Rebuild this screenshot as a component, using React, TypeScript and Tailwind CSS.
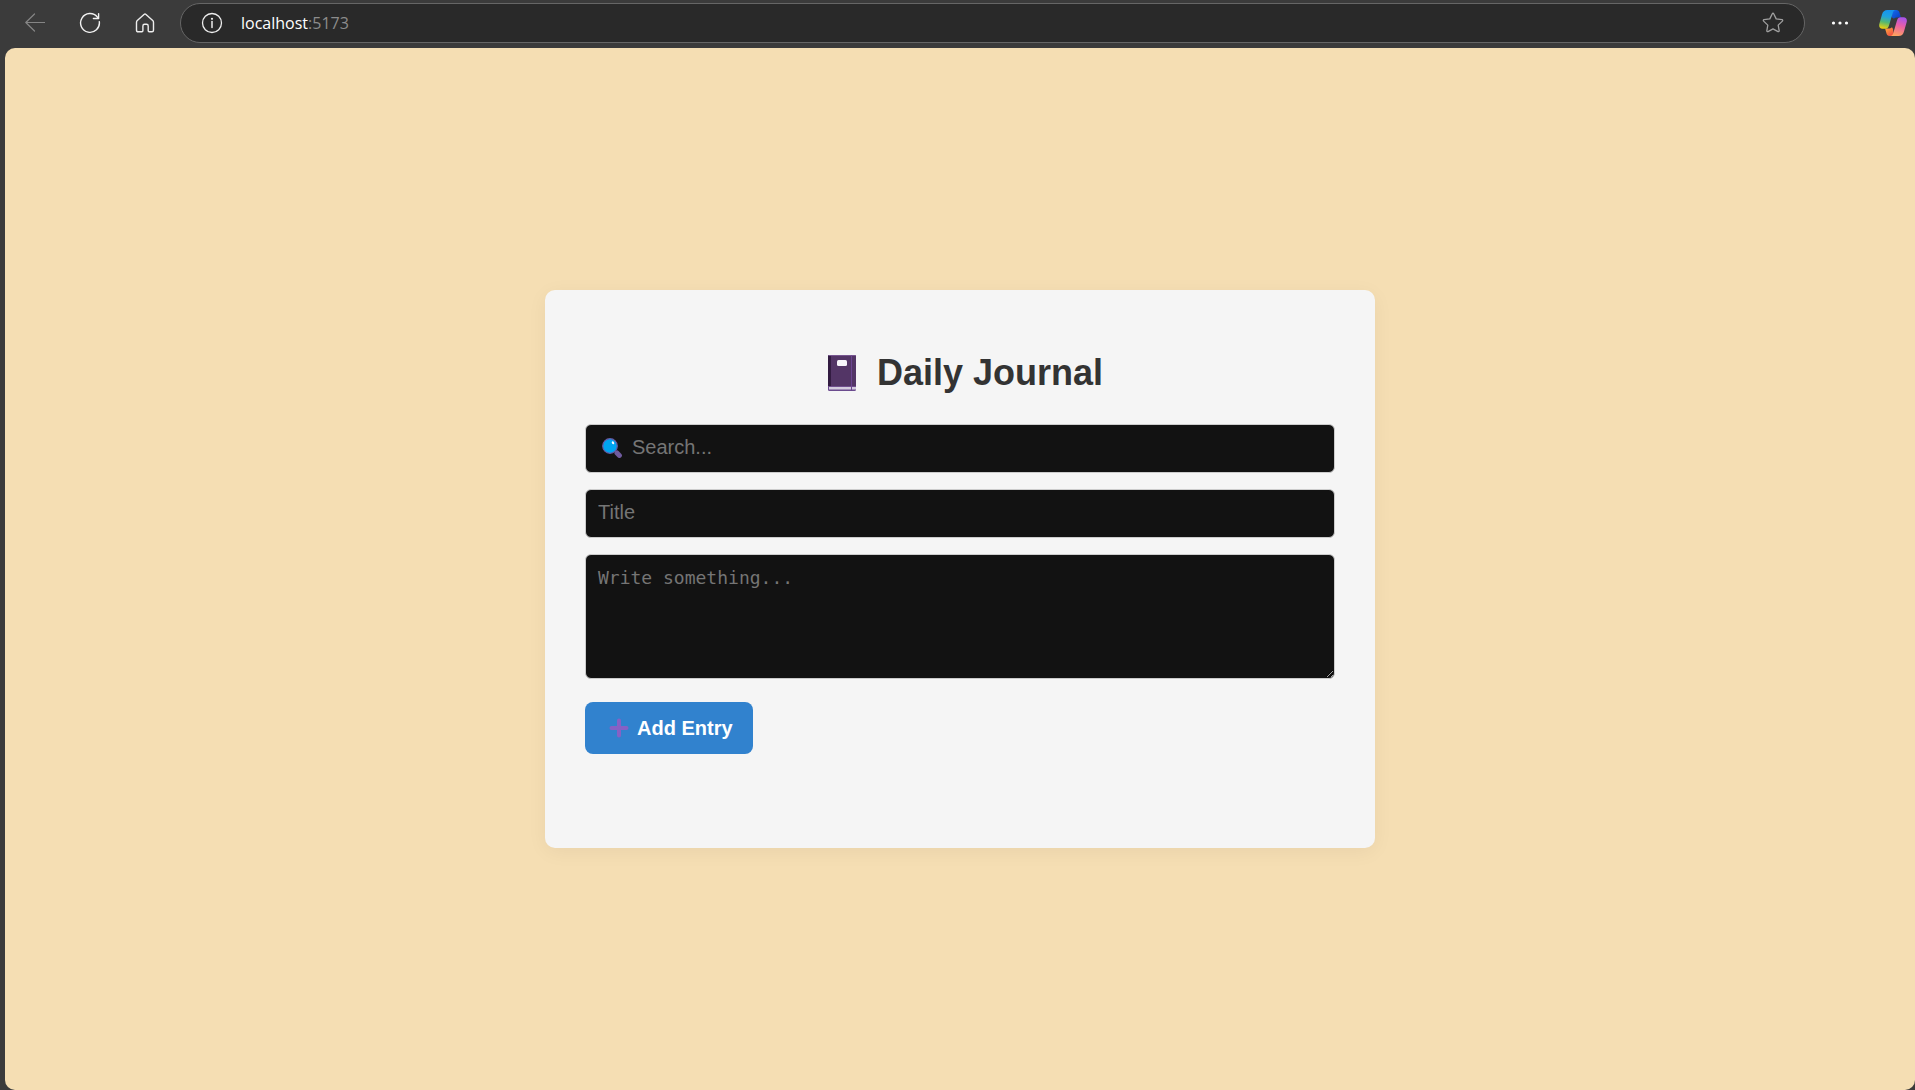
import { useState } from "react";

const fieldClass =
  "block w-full rounded-md border border-[#cccccc] bg-[#121212] px-3 pb-0.5 text-xl text-white outline-none placeholder:text-[#757575] placeholder:opacity-100";

function BackIcon() {
  return (
    <svg width="20" height="20" viewBox="0 0 20 20" fill="none" stroke="#858585" strokeWidth="1.2" strokeLinecap="round" strokeLinejoin="round" aria-hidden="true">
      <path d="M19.500 9.500H.8M9.500 1 .8 9.500l8.700 8.500" />
    </svg>
  );
}

function RefreshIcon() {
  return (
    <svg width="22" height="22" viewBox="0 0 22 22" fill="none" stroke="#f2f2f2" strokeWidth="1.4" strokeLinecap="round" strokeLinejoin="round" aria-hidden="true">
      <path d="M20.300 9.600a9.400 9.400 0 1 1-2-4.600l1 1.300" />
      <path d="M19.600 1.600v4.900h-5.200" />
    </svg>
  );
}

function HomeIcon() {
  return (
    <svg width="20" height="20" viewBox="0 0 20 20" fill="none" stroke="#ededed" strokeWidth="1.4" strokeLinejoin="round" aria-hidden="true">
      <path d="M1.500 9.400c0-.7.3-1.300.8-1.800l6.700-6.100c.6-.5 1.400-.5 2 0l6.700 6.100c.5.5.8 1.100.8 1.800v7.900c0 .9-.6 1.500-1.500 1.500h-2.800c-.6 0-1-.4-1-1v-4.800c0-1-.7-1.700-1.700-1.700h-1.900c-1 0-1.700.7-1.700 1.700v4.800c0 .6-.4 1-1 1H3c-.9 0-1.500-.6-1.500-1.500z" />
    </svg>
  );
}

function InfoIcon() {
  return (
    <svg width="22" height="22" viewBox="0 0 22 22" fill="none" aria-hidden="true">
      <circle cx="11" cy="11" r="9.5" stroke="#ededed" strokeWidth="1.3" />
      <path d="M11 9.600v6" stroke="#ededed" strokeWidth="1.5" strokeLinecap="round" />
      <circle cx="11" cy="6.8" r="1.1" fill="#ededed" />
    </svg>
  );
}

function StarIcon() {
  return (
    <svg width="22" height="22" viewBox="0 0 22 22" fill="none" stroke="#a0a0a0" strokeWidth="1.3" strokeLinejoin="round" aria-hidden="true">
      <path d="M10.300 1.700c.3-.6 1.100-.6 1.400 0l2.500 5.200 5.800.8c.7.100.9.900.4 1.400l-4.200 4 1 5.700c.1.600-.6 1.100-1.200.8L11 16.900l-5 2.700c-.6.300-1.300-.2-1.200-.8l1-5.700-4.200-4c-.5-.5-.3-1.300.4-1.400l5.800-.8z" />
    </svg>
  );
}

function DotsIcon() {
  return (
    <svg width="18" height="4" viewBox="0 0 18 4" fill="#ffffff" aria-hidden="true">
      <circle cx="2.5" cy="2" r="1.6" />
      <circle cx="9" cy="2" r="1.6" />
      <circle cx="15.5" cy="2" r="1.6" />
    </svg>
  );
}

function CopilotIcon() {
  return (
    <svg width="28" height="26" viewBox="0 0 28 26" aria-hidden="true">
      <defs>
        <linearGradient id="cp-left" x1="9" y1="0" x2="5" y2="19" gradientUnits="userSpaceOnUse">
          <stop offset="0" stopColor="#1593f0" />
          <stop offset=".35" stopColor="#20a2dc" />
          <stop offset=".65" stopColor="#56b870" />
          <stop offset="1" stopColor="#f5d20a" />
        </linearGradient>
        <linearGradient id="cp-right" x1="23" y1="7" x2="17" y2="26" gradientUnits="userSpaceOnUse">
          <stop offset="0" stopColor="#a653ee" />
          <stop offset=".45" stopColor="#ea5fa6" />
          <stop offset="1" stopColor="#ffa45c" />
        </linearGradient>
        <linearGradient id="cp-top" x1="14" y1="0" x2="21" y2="8" gradientUnits="userSpaceOnUse">
          <stop offset="0" stopColor="#1468e8" />
          <stop offset="1" stopColor="#0b3fc4" />
        </linearGradient>
        <linearGradient id="cp-bottom" x1="8" y1="19" x2="14" y2="26" gradientUnits="userSpaceOnUse">
          <stop offset="0" stopColor="#ff9a3c" />
          <stop offset="1" stopColor="#ee4146" />
        </linearGradient>
      </defs>
      <path d="M13 0h4.500c1.700 0 2.500.9 3 2.500L21.900 7.500h-3.400c-1.500 0-2.700.2-3.500 1.200L12.500 7z" fill="url(#cp-top)" />
      <path d="M15 26h-4.500c-1.700 0-2.500-.9-3-2.500L6.100 18.500h3.400c1.500 0 2.700-.2 3.500-1.200L14 19z" fill="url(#cp-bottom)" />
      <path d="M8.500 0h8.200c-1.600.2-2.500 1.300-3 3L10 15.500c-.7 2.300-1.800 3.300-3.500 3.300H3.500C.8 18.800-.3 16.700.3 14L3 4.500C3.800 1.500 5.500 0 8.500 0z" fill="url(#cp-left)" />
      <path d="M19.500 26h-8.200c1.600-.2 2.500-1.300 3-3L18 10.500c.7-2.300 1.800-3.300 3.500-3.300h3c2.700 0 3.800 2.100 3.200 4.800L25 21.500c-.8 3-2.500 4.500-5.500 4.500z" fill="url(#cp-right)" />
    </svg>
  );
}

function BookIcon() {
  return (
    <svg width="28" height="36" viewBox="0 0 28 36" aria-hidden="true">
      <rect width="28" height="36" rx="1.5" fill="#6b4b8e" />
      <rect x="1" y="32" width="27" height="2.5" fill="#d3cade" />
      <path d="M0 1.500C0 .7.700 0 1.500 0h25c.8 0 1.500.700 1.500 1.500V31.500H0z" fill="#533566" />
      <path d="M0 1.500C0 .7.700 0 1.500 0H3v31.500H0z" fill="#321b41" />
      <path d="M.5.500h27" stroke="#76558f" strokeWidth="1" />
      <path d="M23.500.500v35" stroke="#6b4590" strokeWidth="1" />
      <path d="M0 31.500h28" stroke="#6f4d8d" strokeWidth="1" />
      <rect x="9" y="5" width="10" height="6" rx="1.5" fill="#f7f5fa" />
    </svg>
  );
}

function SearchIcon() {
  return (
    <svg width="20" height="20" viewBox="0 0 20 20" aria-hidden="true">
      <path d="M12.500 12.500l2 2" stroke="#50458c" strokeWidth="2" />
      <path d="M15 15l2.400 2.400" stroke="#6f5b9e" strokeWidth="5" strokeLinecap="round" />
      <circle cx="8" cy="8" r="7.3" fill="#00a4ef" stroke="#665aa5" strokeWidth="1.2" />
      <ellipse cx="11" cy="4.8" rx="1.1" ry="1.5" transform="rotate(-35 11 4.8)" fill="#ffffff" />
    </svg>
  );
}

function PlusIcon() {
  return (
    <svg width="20" height="20" viewBox="0 0 20 20" stroke="#8661c5" strokeWidth="4" strokeLinecap="round" aria-hidden="true">
      <path d="M10 2.500v15M2.500 10h15" />
    </svg>
  );
}

function BrowserBar() {
  const iconButton = "flex h-10 w-10 shrink-0 items-center justify-center";
  return (
    <header className="flex h-12 items-start gap-[15px] bg-[#3b3b3b] pt-[3px] pr-1 pl-[15px]">
      <button type="button" aria-label="Back" className={iconButton}>
        <BackIcon />
      </button>
      <button type="button" aria-label="Refresh" className={iconButton}>
        <RefreshIcon />
      </button>
      <button type="button" aria-label="Home" className={iconButton}>
        <HomeIcon />
      </button>
      <div className="flex h-10 flex-1 items-center rounded-full border border-[#666666] bg-[#292929] pr-5 pl-5">
        <button type="button" aria-label="Site information">
          <InfoIcon />
        </button>
        <div className="ml-[18px] flex-1 font-['Open_Sans',sans-serif] text-base text-white">
          localhost<span className="text-[#8c8c8c]">:5173</span>
        </div>
        <button type="button" aria-label="Add to favorites">
          <StarIcon />
        </button>
      </div>
      <button type="button" aria-label="Settings and more" className={iconButton}>
        <DotsIcon />
      </button>
      <button type="button" aria-label="Copilot" className="flex h-10 w-9 shrink-0 items-center justify-center">
        <CopilotIcon />
      </button>
    </header>
  );
}

export default function App() {
  const [query, setQuery] = useState("");
  const [title, setTitle] = useState("");
  const [body, setBody] = useState("");

  return (
    <div className="flex min-h-screen flex-col bg-[#3b3b3b] font-['Liberation_Sans',Arial,sans-serif]">
      <BrowserBar />
      <main className="ml-[5px] flex flex-1 items-center justify-center rounded-[10px] bg-[#f5deb3]">
        <section className="w-full max-w-[830px] rounded-[10px] bg-[#f5f5f5] px-10 pt-14 pb-[94px] shadow-[0_4px_20px_rgba(0,0,0,0.05)]">
          <h1 className="mb-6 flex items-center justify-center text-4xl leading-[54px] font-bold text-[#333333]">
            <span className="mr-2.5 flex w-[50px] justify-center">
              <BookIcon />
            </span>
            Daily Journal
          </h1>
          <form className="flex flex-col items-start" onSubmit={(e) => e.preventDefault()}>
            <div className="relative mb-4 w-full">
              <input
                type="text"
                aria-label="Search"
                placeholder="Search..."
                value={query}
                onChange={(e) => setQuery(e.target.value)}
                className={`${fieldClass} h-[49px] pl-[46px]`}
              />
              {query === "" && (
                <span className="pointer-events-none absolute top-3.5 left-[17px]">
                  <SearchIcon />
                </span>
              )}
            </div>
            <input
              type="text"
              aria-label="Title"
              placeholder="Title"
              value={title}
              onChange={(e) => setTitle(e.target.value)}
              className={`${fieldClass} mb-4 h-[49px]`}
            />
            <textarea
              aria-label="Entry"
              placeholder="Write something..."
              value={body}
              onChange={(e) => setBody(e.target.value)}
              className="block h-[125px] w-full resize-y rounded-md border border-[#cccccc] bg-[#121212] px-3 py-[9px] font-['DejaVu_Sans_Mono',monospace] text-lg text-white outline-none scheme-dark placeholder:text-[#757575] placeholder:opacity-100"
            />
            <button
              type="submit"
              className="mt-[23px] flex h-[52px] items-center gap-2 rounded-lg bg-[#3182ce] pr-5 pl-6 text-xl font-bold text-white"
            >
              <PlusIcon />
              Add Entry
            </button>
          </form>
        </section>
      </main>
    </div>
  );
}
